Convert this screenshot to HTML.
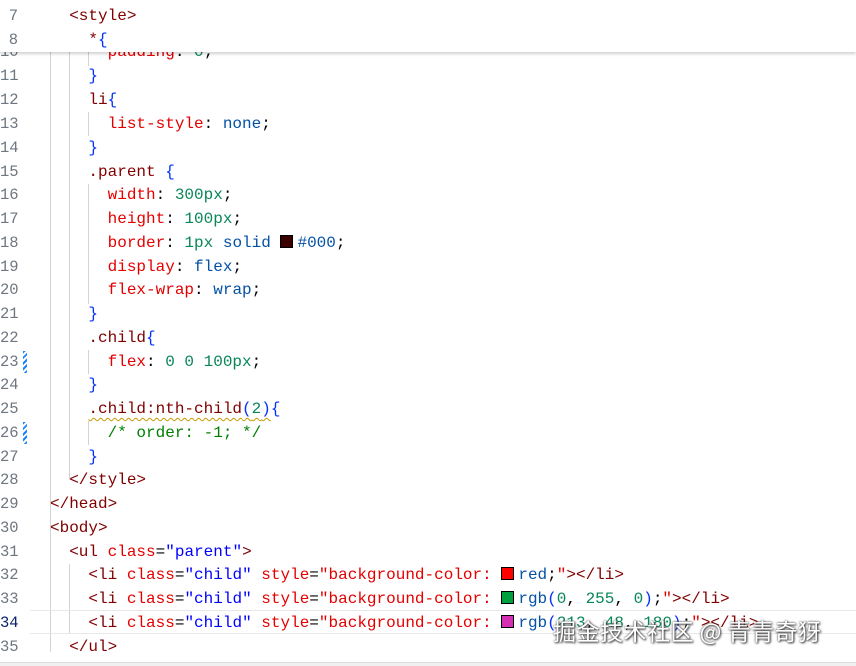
<!DOCTYPE html>
<html><head><meta charset="utf-8"><style>
html,body{margin:0;padding:0;background:#fff;width:856px;height:666px;overflow:hidden;position:relative}
.l{position:absolute;left:0;height:24px;line-height:24px;width:856px;font-family:"Liberation Mono",monospace;font-size:16px;white-space:pre;letter-spacing:0}
.n{position:absolute;left:0;width:18px;text-align:right;color:#6e7681;font-family:"Liberation Mono",monospace;font-size:15.5px}
.c{position:absolute;left:50px;color:#000}
.t{color:#800000}.a{color:#e50000}.s{color:#0000ff}.p{color:#e50000}.v{color:#0451a5}.num{color:#098658}.b{color:#0431fa}.cm{color:#008000}.sel{color:#800000}
.sw{display:inline-block;width:11px;height:11px;border:1px solid #000;vertical-align:-1px;margin-right:4px}
.g{position:absolute;width:1px;background:#d3d3d3}
.mod{position:absolute;left:23px;width:4px;height:22px;background:repeating-linear-gradient(135deg,#1a85ff 0 2px,#fff 2px 4px)}
.sq{text-decoration:underline wavy #c89a00;text-underline-offset:4px;text-decoration-thickness:1px}
</style></head><body>
<div class="g" style="left:50px;top:52px;height:600px"></div>
<div class="g" style="left:69px;top:52px;height:428px"></div>
<div class="g" style="left:88px;top:52px;height:14px"></div>
<div class="g" style="left:88px;top:112px;height:24px"></div>
<div class="g" style="left:88px;top:184px;height:120px"></div>
<div class="g" style="left:88px;top:350px;height:24px"></div>
<div class="g" style="left:88px;top:421px;height:24px"></div>
<div class="g" style="left:69px;top:564px;height:70px"></div>
<div style="position:absolute;left:30px;top:610px;width:826px;height:22px;border-top:1px solid #e8e8e8;border-bottom:1px solid #e8e8e8"></div>
<div class="mod" style="top:351px"></div>
<div class="mod" style="top:422px"></div>

<div class="l" style="top:40px"><span class="n">10</span><span class="c">      <span class="p">padding</span>: <span class="num">0</span>;</span></div>
<div class="l" style="top:64px"><span class="n">11</span><span class="c">    <span class="b">}</span></span></div>
<div class="l" style="top:88px"><span class="n">12</span><span class="c">    <span class="sel">li</span><span class="b">{</span></span></div>
<div class="l" style="top:112px"><span class="n">13</span><span class="c">      <span class="p">list-style</span>: <span class="v">none</span>;</span></div>
<div class="l" style="top:136px"><span class="n">14</span><span class="c">    <span class="b">}</span></span></div>
<div class="l" style="top:160px"><span class="n">15</span><span class="c">    <span class="sel">.parent</span> <span class="b">{</span></span></div>
<div class="l" style="top:183px"><span class="n">16</span><span class="c">      <span class="p">width</span>: <span class="num">300px</span>;</span></div>
<div class="l" style="top:207px"><span class="n">17</span><span class="c">      <span class="p">height</span>: <span class="num">100px</span>;</span></div>
<div class="l" style="top:231px"><span class="n">18</span><span class="c">      <span class="p">border</span>: <span class="num">1px</span> <span class="v">solid</span> <span class="sw" style="background:#3a0000"></span><span class="v">#000</span>;</span></div>
<div class="l" style="top:255px"><span class="n">19</span><span class="c">      <span class="p">display</span>: <span class="v">flex</span>;</span></div>
<div class="l" style="top:278px"><span class="n">20</span><span class="c">      <span class="p">flex-wrap</span>: <span class="v">wrap</span>;</span></div>
<div class="l" style="top:302px"><span class="n">21</span><span class="c">    <span class="b">}</span></span></div>
<div class="l" style="top:326px"><span class="n">22</span><span class="c">    <span class="sel">.child</span><span class="b">{</span></span></div>
<div class="l" style="top:350px"><span class="n">23</span><span class="c">      <span class="p">flex</span>: <span class="num">0 0 100px</span>;</span></div>
<div class="l" style="top:373px"><span class="n">24</span><span class="c">    <span class="b">}</span></span></div>
<div class="l" style="top:397px"><span class="n">25</span><span class="c">    <span class="sq"><span class="sel">.child:nth-child</span><span class="b">(</span><span class="num">2</span><span class="b">)</span></span><span class="b">{</span></span></div>
<div class="l" style="top:421px"><span class="n">26</span><span class="c">      <span class="cm">/* order: -1; */</span></span></div>
<div class="l" style="top:445px"><span class="n">27</span><span class="c">    <span class="b">}</span></span></div>
<div class="l" style="top:468px"><span class="n">28</span><span class="c"><span class="t">  &lt;/style&gt;</span></span></div>
<div class="l" style="top:492px"><span class="n">29</span><span class="c"><span class="t">&lt;/head&gt;</span></span></div>
<div class="l" style="top:516px"><span class="n">30</span><span class="c"><span class="t">&lt;body&gt;</span></span></div>
<div class="l" style="top:540px"><span class="n">31</span><span class="c">  <span class="t">&lt;ul</span> <span class="a">class</span>=<span class="s">"parent"</span><span class="t">&gt;</span></span></div>
<div class="l" style="top:563px"><span class="n">32</span><span class="c">    <span class="t">&lt;li</span> <span class="a">class</span>=<span class="s">"child"</span> <span class="a">style</span>=<span class="a">"background-color: </span><span class="sw" style="background:#ff0000"></span><span class="v">red</span>;<span class="a">"</span><span class="t">&gt;&lt;/li&gt;</span></span></div>
<div class="l" style="top:587px"><span class="n">33</span><span class="c">    <span class="t">&lt;li</span> <span class="a">class</span>=<span class="s">"child"</span> <span class="a">style</span>=<span class="a">"background-color: </span><span class="sw" style="background:#00a040"></span><span class="v">rgb</span><span class="b">(</span><span class="num">0</span>, <span class="num">255</span>, <span class="num">0</span><span class="b">)</span>;<span class="a">"</span><span class="t">&gt;&lt;/li&gt;</span></span></div>
<div class="l" style="top:611px"><span class="n" style="color:#0b216f">34</span><span class="c">    <span class="t">&lt;li</span> <span class="a">class</span>=<span class="s">"child"</span> <span class="a">style</span>=<span class="a">"background-color: </span><span class="sw" style="background:#d530b4"></span><span class="v">rgb</span><span class="b">(</span><span class="num">213</span>, <span class="num">48</span>, <span class="num">180</span><span class="b">)</span>;<span class="a">"</span><span class="t">&gt;&lt;/li&gt;</span></span></div>
<div class="l" style="top:635px"><span class="n">35</span><span class="c"><span class="t">  &lt;/ul&gt;</span></span></div>
<div class="l" style="top:658px"><span class="n">36</span><span class="c"><span class="t">&lt;/body&gt;</span></span></div>
<div style="position:absolute;left:0;top:662px;width:856px;height:4px;background:#f0f0f0;border-top:1px solid #ddd"></div>

<div style="position:absolute;left:0;top:0;width:856px;height:52px;background:#fff;box-shadow:0 2px 3px rgba(0,0,0,0.18)">
<div class="l" style="top:4px"><span class="n">7</span><span class="c"><span class="t">  &lt;style&gt;</span></span></div>
<div class="l" style="top:28px"><span class="n">8</span><span class="c">    <span class="sel">*</span><span class="b">{</span></span></div>
</div>

<div style="position:absolute;left:553px;top:614px;font-family:'Noto Sans CJK SC',sans-serif;font-size:23px;line-height:32px;color:#fff;text-shadow:0 0 2px #333,1px 1px 2px #333;white-space:nowrap;letter-spacing:0.5px">掘金技术社区 @ 青青奇犽</div>
</body></html>
